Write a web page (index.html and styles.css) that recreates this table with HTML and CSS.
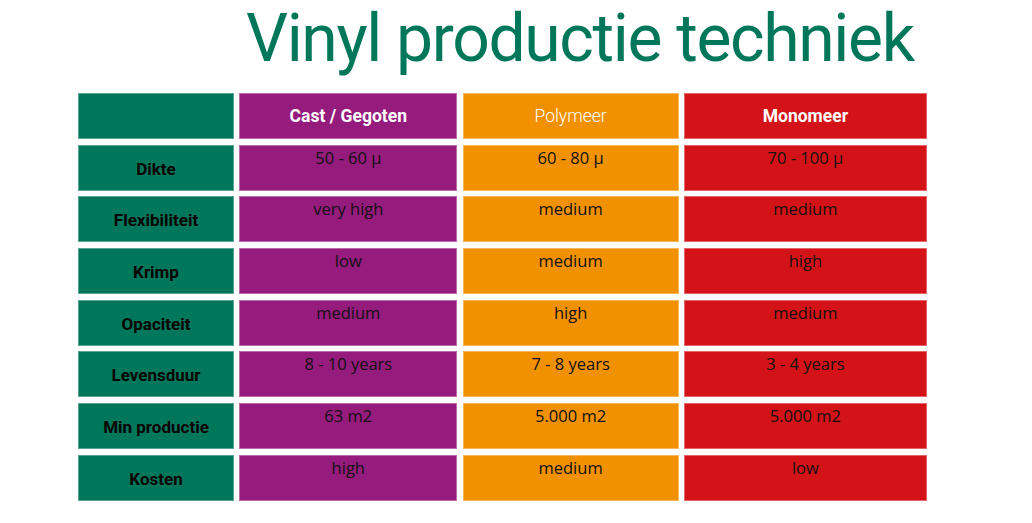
FILE: index.html
```html
<!DOCTYPE html>
<html lang="nl">
<head>
<meta charset="utf-8">
<title>Vinyl productie techniek</title>
<link rel="stylesheet" href="styles.css">
</head>
<body>
<h1 class="title">Vinyl productie techniek</h1>
<div class="table">
  <div class="cell label"></div>
  <div class="cell head cast">Cast / Gegoten</div>
  <div class="cell head poly light">Polymeer</div>
  <div class="cell head mono">Monomeer</div>

  <div class="cell label">Dikte</div>
  <div class="cell val cast">50 - 60 µ</div>
  <div class="cell val poly">60 - 80 µ</div>
  <div class="cell val mono">70 - 100 µ</div>

  <div class="cell label">Flexibiliteit</div>
  <div class="cell val cast">very high</div>
  <div class="cell val poly">medium</div>
  <div class="cell val mono">medium</div>

  <div class="cell label">Krimp</div>
  <div class="cell val cast">low</div>
  <div class="cell val poly">medium</div>
  <div class="cell val mono">high</div>

  <div class="cell label">Opaciteit</div>
  <div class="cell val cast">medium</div>
  <div class="cell val poly">high</div>
  <div class="cell val mono">medium</div>

  <div class="cell label">Levensduur</div>
  <div class="cell val cast">8 - 10 years</div>
  <div class="cell val poly">7 - 8 years</div>
  <div class="cell val mono">3 - 4 years</div>

  <div class="cell label">Min productie</div>
  <div class="cell val cast">63 m2</div>
  <div class="cell val poly">5.000 m2</div>
  <div class="cell val mono">5.000 m2</div>

  <div class="cell label">Kosten</div>
  <div class="cell val cast">high</div>
  <div class="cell val poly">medium</div>
  <div class="cell val mono">low</div>
</div>
</body>
</html>
```

FILE: styles.css
```css
html, body {
  margin: 0;
  padding: 0;
  background: #ffffff;
}

body {
  width: 1032px;
  height: 523px;
  overflow: hidden;
  font-family: "Open Sans", "DejaVu Sans", sans-serif;
}

.title {
  margin: 0 0 16px 0;
  padding: 0 0 0 246px;
  height: 77px;
  font-family: "Roboto", "Open Sans", sans-serif;
  font-weight: 400;
  font-size: 66px;
  line-height: 77px;
  letter-spacing: -1.35px;
  color: #00775a;
  white-space: nowrap;
}

.table {
  margin-left: 78px;
  display: grid;
  grid-template-columns: 156px 218px 216px 243px;
  grid-auto-rows: 46px;
  column-gap: 5.3px;
  row-gap: 5.7px;
  width: max-content;
}

.cell {
  box-sizing: border-box;
  box-shadow: inset 0 0 0 1px rgba(255, 255, 255, 0.35);
  text-align: center;
}

.label {
  background: #00765a;
  color: #050505;
  font-family: "Roboto", "Liberation Sans", sans-serif;
  font-weight: 700;
  font-size: 17px;
  display: flex;
  align-items: center;
  justify-content: center;
  padding-top: 2px;
}

.head {
  color: #ffffff;
  font-family: "Roboto", "Liberation Sans", sans-serif;
  font-weight: 700;
  font-size: 17.5px;
  display: flex;
  align-items: center;
  justify-content: center;
}

.head.light {
  font-weight: 300;
  font-size: 17.5px;
}

.val {
  color: #111111;
  font-family: "Open Sans", sans-serif;
  font-size: 16.5px;
  line-height: 22px;
  padding-top: 2px;
}

.cast { background: #951b7d; }
.poly { background: #f19100; }
.mono { background: #d31317; }
```
